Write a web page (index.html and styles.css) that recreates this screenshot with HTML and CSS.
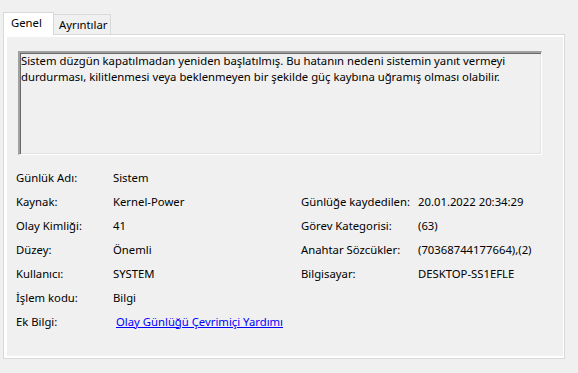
FILE: index.html
```html
<!DOCTYPE html>
<html lang="tr">
<head>
    <meta charset="UTF-8">
    <title>Olay Özellikleri</title>
    <link rel="stylesheet" href="styles.css">
</head>
<body>

    <div class="window">
        <div class="tabs">
            <div class="tab active">Genel</div>
            <div class="tab">Ayrıntılar</div>
        </div>

        <div class="panel">
            <div class="page">
                <div class="desc">Sistem düzgün kapatılmadan yeniden başlatılmış. Bu hatanın nedeni sistemin yanıt vermeyi durdurması, kilitlenmesi veya beklenmeyen bir şekilde güç kaybına uğramış olması olabilir.</div>

                <div class="fields">
                    <span class="k">Günlük Adı:</span>
                    <span class="v">Sistem</span>

                    <span class="k">Kaynak:</span>
                    <span class="v">Kernel-Power</span>
                    <span class="rk">Günlüğe kaydedilen:</span>
                    <span class="rv">20.01.2022 20:34:29</span>

                    <span class="k">Olay Kimliği:</span>
                    <span class="v">41</span>
                    <span class="rk">Görev Kategorisi:</span>
                    <span class="rv">(63)</span>

                    <span class="k">Düzey:</span>
                    <span class="v">Önemli</span>
                    <span class="rk">Anahtar Sözcükler:</span>
                    <span class="rv">(70368744177664),(2)</span>

                    <span class="k">Kullanıcı:</span>
                    <span class="v">SYSTEM</span>
                    <span class="rk">Bilgisayar:</span>
                    <span class="rv">DESKTOP-SS1EFLE</span>

                    <span class="k">İşlem kodu:</span>
                    <span class="v">Bilgi</span>

                    <span class="k">Ek Bilgi:</span>
                    <span class="v"><a class="help" href="#">Olay Günlüğü Çevrimiçi Yardımı</a></span>
                </div>
            </div>
        </div>
    </div>

</body>
</html>
```

FILE: styles.css
```css
body {
    margin: 0;
    background-color: #f0f0f0;
    font-family: "Noto Sans", "Open Sans", sans-serif;
    font-size: 11.3px;
    color: #000;
}

.window {
    padding: 12px 0 0 3px;
}

/* tab strip */
.tabs {
    display: flex;
    align-items: flex-end;
    height: 22px;
}

.tab {
    box-sizing: border-box;
    height: 20px;
    line-height: 19px;
    padding-left: 5px;
    width: 57px;
    border-top: 1px solid #d9d9d9;
    border-right: 1px solid #d9d9d9;
    background-color: #f0f0f0;
}

.tab.active {
    position: relative;
    z-index: 1;
    width: 51px;
    height: 23px;
    padding-left: 7px;
    margin-bottom: -1px;
    border-left: 1px solid #d9d9d9;
    background-color: #fff;
}

/* tab page */
.panel {
    width: 556px;
    border: 1px solid #d9d9d9;
    background-color: #fff;
    padding: 2px 1px 2px 3px;
}

.page {
    height: 319px;
    background-color: #f0f0f0;
    padding-top: 14px;
    box-sizing: border-box;
}

.desc {
    box-sizing: border-box;
    width: 524px;
    height: 104px;
    margin-left: 11px;
    padding: 0 3px 0 1px;
    line-height: 16px;
    border-style: solid;
    border-width: 2px 1px 1px 2px;
    border-color: #a0a0a0 #fff #fff #a0a0a0;
    box-shadow: inset 1px 1px 0 #696969, inset -1px -1px 0 #e3e3e3;
}

/* property grid */
.fields {
    display: grid;
    grid-template-columns: 97px 188px 117px auto;
    grid-auto-rows: 24px;
    align-items: center;
    margin: 10px 0 0 9px;
    white-space: nowrap;
}

.k { grid-column: 1; }
.v { grid-column: 2; }
.rk { grid-column: 3; }
.rv { grid-column: 4; }

.help {
    margin-left: 3px;
    color: #0000ff;
    text-decoration: underline;
}
```
